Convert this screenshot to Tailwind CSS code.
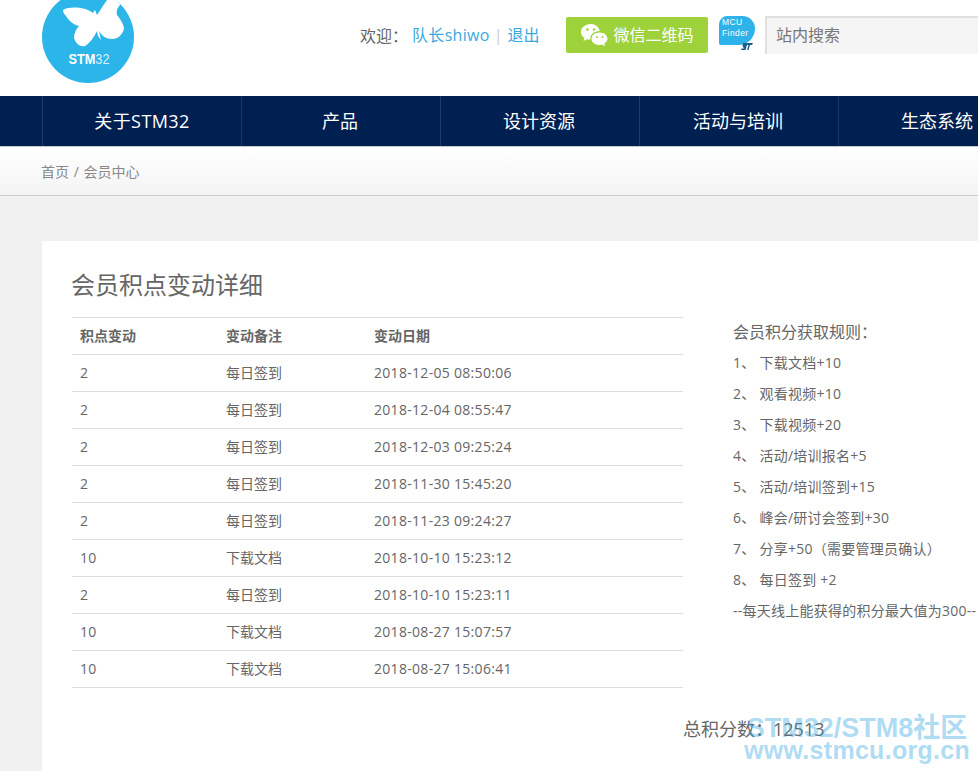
<!DOCTYPE html>
<html lang="zh-CN">
<head>
  <meta charset="UTF-8">
  <title>会员中心</title>
  <script src="https://cdn.jsdelivr.net/npm/@tailwindcss/browser@4"></script>
</head>
<body class="relative w-[978px] h-[771px] overflow-hidden bg-[#f1f1f1] text-[#666] font-['Open_Sans','Noto_Sans_CJK_SC',sans-serif]">
  <!-- Header -->
  <header class="flex h-[96px] bg-white">
    <svg class="ml-[42px] shrink-0" width="92" height="83" viewBox="42 0 92 83">
      <circle cx="88" cy="37" r="46" fill="#2cb5e8"/>
      <path fill="#fff" d="M63 10C70 6 85 7 93 13L95 10L97 15C101 9 104 4 107 0L116 0C118 3 120 3 120 5C117 8 116 12 117 15C121 20 124 25 124 29C122 35 118 39 112 39C106 39 102 36 99 31L101 40L98 36L97 31C94 37 90 43 85 46C80 47 76 44 74 38C74 33 76 29 79 26C74 25 69 21 66 16C64 14 63 12 63 10Z"/>
      <text x="68.500" y="64" font-size="15" font-family="Liberation Sans" fill="#fff" textLength="41" lengthAdjust="spacingAndGlyphs"><tspan font-weight="700">STM</tspan><tspan fill="#d5f0fb">32</tspan></text>
    </svg>
    <div class="flex items-start pt-4 ml-[226px]">
      <div class="flex items-center w-[181px] h-[38px] text-base whitespace-nowrap">
        <span>欢迎<span class="font-['Noto_Sans_CJK_TC']">：</span></span>
        <a class="ml-[4px] tracking-[0.3px] text-[#3aa8e0]">队长shiwo</a>
        <span class="ml-[4px] mr-[5px] text-[#ccc]">|</span>
        <a class="text-[#3aa8e0]">退出</a>
      </div>
      <a class="flex items-center justify-center gap-[5px] w-[142px] h-[36px] mt-px ml-[25px] rounded-[2px] bg-[#9ed23b] text-white text-base">
        <svg width="28" height="24" viewBox="0 0 28 24" fill="#fff">
          <path d="M11 1C5 1 1 4.800 1 9C1 11.500 2.300 13.500 4.500 15L3.500 18L7 16.200C8 16.500 9 16.700 10.200 16.700C9.900 11.500 13.500 8 19.800 8C18.800 4 15.400 1 11 1Z"/>
          <path d="M19.500 9.500C14.800 9.500 11.500 12.400 11.500 15.800C11.500 19.300 14.800 22 19.500 22C20.400 22 21.300 21.900 22 21.600L25 23.200L24.300 20.500C26 19.400 27.500 17.800 27.500 15.800C27.500 12.400 24.200 9.500 19.500 9.500Z"/>
          <circle cx="7.500" cy="6.500" r="1.300" fill="#9ed23b"/><circle cx="14" cy="6.500" r="1.300" fill="#9ed23b"/>
          <circle cx="17" cy="14" r="1" fill="#9ed23b"/><circle cx="22.500" cy="14" r="1" fill="#9ed23b"/>
        </svg>
        <span>微信二维码</span>
      </a>
      <div class="relative w-[36px] h-[35px] ml-[11px]">
        <div class="w-[36px] h-[29px] rounded-tl-[10px] rounded-tr-[15px] rounded-br-[20px] rounded-bl-[2px] bg-[#2eb2ea] pl-[3px] pt-px font-['Liberation_Sans'] text-[8.500px] leading-[11px] tracking-[0.4px] text-white">MCU<br>Finder</div>
        <svg class="absolute right-[2px] top-[27px]" width="13" height="7" viewBox="0 0 13 7">
          <path fill="#1d5c8f" d="M3 0H13L12 2H10L8.500 7H7L8.500 2H7L5.500 7H1L1.500 5.500H4L2.500 3L3 0Z"/>
        </svg>
      </div>
      <div class="flex items-center w-[213px] h-[38px] ml-[10px] pl-[9px] pb-[2px] bg-[#f5f5f5] border-l-2 border-t-2 border-[#e0e0e0] text-base text-[#777]">站内搜索</div>
    </div>
  </header>

  <!-- Navigation -->
  <nav class="flex h-[51px] pl-[42px] overflow-hidden bg-[#002052] border-b border-[#c4c8cc] text-white text-lg">
    <a class="flex items-center justify-center shrink-0 w-[199px] border-l border-[#1b3a66] tracking-[0.4px]">关于STM32</a>
    <a class="flex items-center justify-center shrink-0 w-[199px] pr-[2px] border-l border-[#1b3a66]">产品</a>
    <a class="flex items-center justify-center shrink-0 w-[199px] pr-[2px] border-l border-[#1b3a66]">设计资源</a>
    <a class="flex items-center justify-center shrink-0 w-[199px] pr-[2px] border-l border-[#1b3a66]">活动与培训</a>
    <a class="flex items-center justify-center shrink-0 w-[199px] pr-[2px] border-l border-[#1b3a66]">生态系统</a>
  </nav>

  <!-- Breadcrumb -->
  <div class="flex items-center h-[49px] pl-[41px] pt-px bg-gradient-to-b from-white to-[#f4f4f4] border-b border-[#ccc] text-sm text-[#888] whitespace-pre">首页 <span class="mx-px">/</span> 会员中心</div>

  <!-- Main card -->
  <main class="flex flex-col ml-[42px] mt-[45px] h-[530px] pl-[30px] bg-white">
    <h1 class="mt-[27px] -ml-px h-[49px] text-2xl leading-[34px] text-[#666]">会员积点变动详细</h1>
    <div class="flex">
      <table class="shrink-0 w-[611px] h-fit border-collapse text-sm text-left table-fixed">
        <thead>
          <tr class="h-[37px] border-y border-[#ddd]">
            <th class="w-[146px] pl-2 font-bold">积点变动</th>
            <th class="w-[148px] pl-2 font-bold">变动备注</th>
            <th class="pl-2 font-bold">变动日期</th>
          </tr>
        </thead>
        <tbody class="tracking-[0.3px]">
          <tr class="h-[37px] border-b border-[#ddd]"><td class="pl-2">2</td><td class="pl-2 tracking-normal">每日签到</td><td class="pl-2">2018-12-05 08:50:06</td></tr>
          <tr class="h-[37px] border-b border-[#ddd]"><td class="pl-2">2</td><td class="pl-2 tracking-normal">每日签到</td><td class="pl-2">2018-12-04 08:55:47</td></tr>
          <tr class="h-[37px] border-b border-[#ddd]"><td class="pl-2">2</td><td class="pl-2 tracking-normal">每日签到</td><td class="pl-2">2018-12-03 09:25:24</td></tr>
          <tr class="h-[37px] border-b border-[#ddd]"><td class="pl-2">2</td><td class="pl-2 tracking-normal">每日签到</td><td class="pl-2">2018-11-30 15:45:20</td></tr>
          <tr class="h-[37px] border-b border-[#ddd]"><td class="pl-2">2</td><td class="pl-2 tracking-normal">每日签到</td><td class="pl-2">2018-11-23 09:24:27</td></tr>
          <tr class="h-[37px] border-b border-[#ddd]"><td class="pl-2">10</td><td class="pl-2 tracking-normal">下载文档</td><td class="pl-2">2018-10-10 15:23:12</td></tr>
          <tr class="h-[37px] border-b border-[#ddd]"><td class="pl-2">2</td><td class="pl-2 tracking-normal">每日签到</td><td class="pl-2">2018-10-10 15:23:11</td></tr>
          <tr class="h-[37px] border-b border-[#ddd]"><td class="pl-2">10</td><td class="pl-2 tracking-normal">下载文档</td><td class="pl-2">2018-08-27 15:07:57</td></tr>
          <tr class="h-[37px] border-b border-[#ddd]"><td class="pl-2">10</td><td class="pl-2 tracking-normal">下载文档</td><td class="pl-2">2018-08-27 15:06:41</td></tr>
        </tbody>
      </table>
      <aside class="shrink-0 w-[245px] -mt-px ml-[50px] text-sm leading-[31px] tracking-[0.25px] whitespace-nowrap">
        <p class="h-[31px] text-base leading-[31px] tracking-normal">会员积分获取规则<span class="font-['Noto_Sans_CJK_TC']">：</span></p>
        <p>1、 下载文档+10</p>
        <p>2、 观看视频+10</p>
        <p>3、 下载视频+20</p>
        <p>4、 活动/培训报名+5</p>
        <p>5、 活动/培训签到+15</p>
        <p>6、 峰会/研讨会签到+30</p>
        <p class="h-[31px]">7、 分享+50<span class="font-['Noto_Sans_CJK_TC']">（</span>需要管理员确认<span class="font-['Noto_Sans_CJK_TC']">）</span></p>
        <p>8、 每日签到 +2</p>
        <p>--每天线上能获得的积分最大值为300--</p>
      </aside>
    </div>
    <p class="mt-[27px] ml-[611px] text-lg leading-[26px]">总积分数<span class="font-['Noto_Sans_CJK_TC']">：</span>12513</p>
  </main>

  <!-- Forum watermark burned into the picture -->
  <div class="absolute left-[744px] top-[713px] w-[226px] text-center font-['Liberation_Sans','Noto_Sans_CJK_SC',sans-serif] font-bold text-[#2ea3e0]/40 whitespace-nowrap">
    <div class="text-[27px] leading-[30px]">STM32/STM8社区</div>
    <div class="text-[25px] leading-[14px] tracking-[0.3px]">www.stmcu.org.cn</div>
  </div>
</body>
</html>
